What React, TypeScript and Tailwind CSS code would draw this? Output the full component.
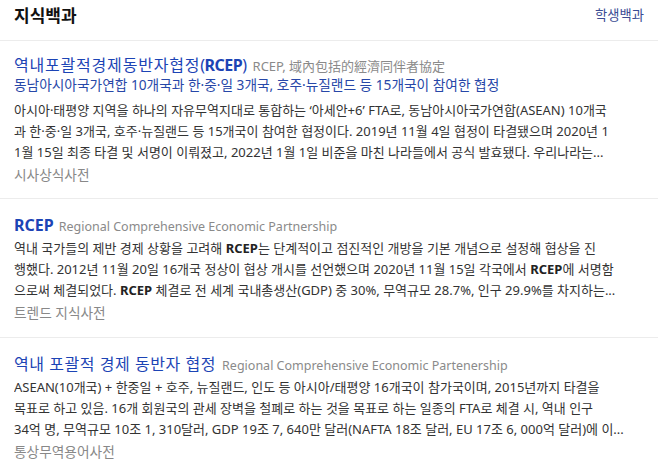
import React from "react";

const font = { fontFamily: '"Noto Sans", "Noto Sans CJK KR", sans-serif' };

type Entry = {
  title: React.ReactNode;
  sub?: string;
  lines: React.ReactNode[];
  source: string;
};

const B = ({ children }: { children: React.ReactNode }) => (
  <b className="font-bold text-[#222]">{children}</b>
);

const entries: Entry[] = [
  {
    title: (
      <>
        <span className="tracking-[0.8px]">역내포괄적경제동반자협정</span>
        <span className="tracking-[-0.5px]">
          (<b className="font-bold">RCEP</b>)
        </span>
        <span className="ml-[6px] text-[13px] text-[#8a8a8a]">
          RCEP, 域內包括的經濟同伴者協定
        </span>
      </>
    ),
    sub: "동남아시아국가연합 10개국과 한·중·일 3개국, 호주·뉴질랜드 등 15개국이 참여한 협정",
    lines: [
      "아시아·태평양 지역을 하나의 자유무역지대로 통합하는 ‘아세안+6’ FTA로, 동남아시아국가연합(ASEAN) 10개국",
      "과 한·중·일 3개국, 호주·뉴질랜드 등 15개국이 참여한 협정이다. 2019년 11월 4일 협정이 타결됐으며 2020년 1",
      "1월 15일 최종 타결 및 서명이 이뤄졌고, 2022년 1월 1일 비준을 마친 나라들에서 공식 발효됐다. 우리나라는...",
    ],
    source: "시사상식사전",
  },
  {
    title: (
      <>
        <b className="font-bold">RCEP</b>
        <span className="ml-[5px] text-[12.5px] text-[#8a8a8a]">
          Regional Comprehensive Economic Partnership
        </span>
      </>
    ),
    lines: [
      <>
        역내 국가들의 제반 경제 상황을 고려해 <B>RCEP</B>는 단계적이고 점진적인 개방을 기본 개념으로 설정해 협상을 진
      </>,
      <>
        행했다. 2012년 11월 20일 16개국 정상이 협상 개시를 선언했으며 2020년 11월 15일 각국에서 <B>RCEP</B>에 서명함
      </>,
      <>
        으로써 체결되었다. <B>RCEP</B> 체결로 전 세계 국내총생산(GDP) 중 30%, 무역규모 28.7%, 인구 29.9%를 차지하는...
      </>,
    ],
    source: "트렌드 지식사전",
  },
  {
    title: (
      <>
        <span className="tracking-[0.55px]">역내 포괄적 경제 동반자 협정</span>
        <span className="ml-[6px] text-[12.5px] text-[#8a8a8a]">
          Regional Comprehensive Economic Partenership
        </span>
      </>
    ),
    lines: [
      "ASEAN(10개국) + 한중일 + 호주, 뉴질랜드, 인도 등 아시아/태평양 16개국이 참가국이며, 2015년까지 타결을",
      "목표로 하고 있음. 16개 회원국의 관세 장벽을 철폐로 하는 것을 목표로 하는 일종의 FTA로 체결 시, 역내 인구",
      "34억 명, 무역규모 10조 1, 310달러, GDP 19조 7, 640만 달러(NAFTA 18조 달러, EU 17조 6, 000억 달러)에 이...",
    ],
    source: "통상무역용어사전",
  },
];

export default function App() {
  return (
    <div className="w-[658px] h-[472px] overflow-hidden bg-white" style={font}>
      {/* header */}
      <div className="h-[41px] border-b border-[#ececec] px-[14px] pt-[4px]">
        <div className="flex h-[23px] items-center justify-between">
          <h2 className="text-[17px] font-bold text-[#111]">지식백과</h2>
          <a className="text-[13.3px] text-[#3b4c93]">학생백과</a>
        </div>
      </div>

      {entries.map((e, i) => (
        <div
          key={i}
          className={`px-[14px] border-b border-[#ececec] ${
            i === 0 ? "pt-[13px] pb-[13px]" : "pt-[15px] pb-[14px]"
          }`}
        >
          <div className="h-[22px] leading-[22px] whitespace-nowrap text-[16px] text-[#1c44b5]">
            {e.title}
          </div>
          {e.sub && (
            <div className="h-[17px] leading-[17px] whitespace-nowrap text-[13.7px] text-[#2747a8]">
              {e.sub}
            </div>
          )}
          <div
            className={`text-[13px] leading-[21px] text-[#333] ${
              e.sub ? "mt-[7px]" : "mt-[2px]"
            }`}
          >
            {e.lines.map((l, j) => (
              <div key={j} className="whitespace-nowrap overflow-hidden">
                {l}
              </div>
            ))}
          </div>
          <div className="mt-[1px] text-[13.7px] leading-[21px] text-[#888]">
            {e.source}
          </div>
        </div>
      ))}
    </div>
  );
}
